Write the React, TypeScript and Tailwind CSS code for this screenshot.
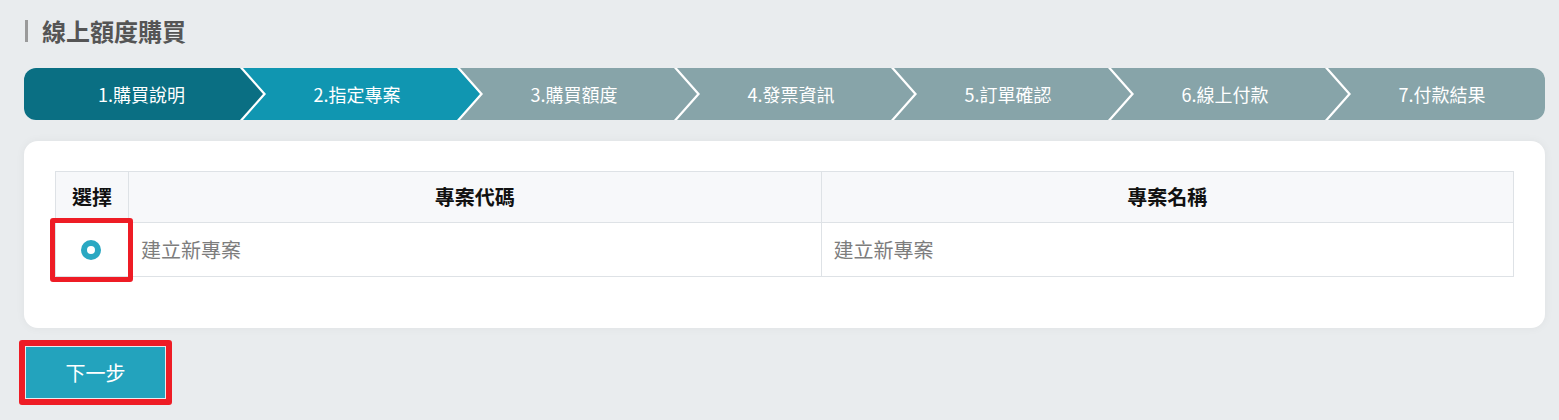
import React from "react";

const steps = [
  "1.購買說明",
  "2.指定專案",
  "3.購買額度",
  "4.發票資訊",
  "5.訂單確認",
  "6.線上付款",
  "7.付款結果",
];

const stepShape = (i: number) => {
  if (i === 0)
    return "w-[239px] pr-[4px] [clip-path:polygon(0_0,calc(100%_-_23px)_0,100%_50%,calc(100%_-_23px)_100%,0_100%)]";
  if (i === steps.length - 1)
    return "w-[217px] -ml-[20px] pl-[11px] [clip-path:polygon(0_0,100%_0,100%_100%,0_100%,23px_50%)]";
  return "w-[237px] -ml-[20px] pr-[9px] [clip-path:polygon(0_0,calc(100%_-_23px)_0,100%_50%,calc(100%_-_23px)_100%,0_100%,23px_50%)]";
};

const stepColor = (i: number) => {
  if (i === 0) return "bg-[#0a6f83]";
  if (i === 1) return "bg-[#1096b1]";
  return "bg-[#87a4a9]";
};

export default function App() {
  return (
    <div
      className="min-h-[420px] bg-[#e9ecee] pl-[24px] pr-[14px] pt-[20px]"
      style={{ fontFamily: '"Noto Sans CJK TC", "Noto Sans", sans-serif' }}
    >
      {/* title */}
      <div className="ml-px flex h-[22px] items-center border-l-[3px] border-[#9a9a9a] pl-[14px]">
        <span className="text-[24px] font-bold leading-[22px] text-[#555]">
          線上額度購買
        </span>
      </div>

      {/* steps */}
      <div className="mt-[26px] flex h-[52px] overflow-hidden rounded-[12px] bg-white">
        {steps.map((s, i) => (
          <div
            key={s}
            className={`${stepShape(i)} ${stepColor(i)} flex shrink-0 items-center justify-center text-[18px] text-white`}
          >
            {s}
          </div>
        ))}
      </div>

      {/* card */}
      <div className="mt-[21px] rounded-[14px] bg-white px-[31px] pb-[51px] pt-[30px] shadow-[0_0_10px_rgba(0,0,0,0.05)]">
        <div className="relative">
          <table className="w-full table-fixed border-collapse text-[20px]">
            <colgroup>
              <col className="w-[73px]" />
              <col />
              <col />
            </colgroup>
            <thead>
              <tr className="h-[51px] bg-[#f7f8fa]">
                <th className="border border-[#dee2e6] font-bold text-[#111]">選擇</th>
                <th className="border border-[#dee2e6] font-bold text-[#111]">專案代碼</th>
                <th className="border border-[#dee2e6] font-bold text-[#111]">專案名稱</th>
              </tr>
            </thead>
            <tbody>
              <tr className="h-[54px]">
                <td className="border border-[#dee2e6]">
                  <div className="flex justify-center pr-[3px]">
                    <span className="h-[20px] w-[20px] rounded-full border-[6px] border-[#2aa8c2] bg-white" />
                  </div>
                </td>
                <td className="border border-[#dee2e6] px-[12px] text-[#7d7d7d]">建立新專案</td>
                <td className="border border-[#dee2e6] px-[12px] text-[#7d7d7d]">建立新專案</td>
              </tr>
            </tbody>
          </table>
          <div className="absolute left-[-5px] top-[47px] h-[64px] w-[83px] rounded-[3px] border-[5px] border-[#ee1c25]" />
        </div>
      </div>

      {/* next */}
      <div className="relative ml-[2px] mt-[19px] w-[139px]">
        <button className="flex h-[51px] w-[139px] items-center justify-center bg-[#23a3bd] text-[20px] text-white">
          下一步
        </button>
        <div className="absolute -inset-[7px] rounded-[3px] border-[6px] border-[#ee1c25]" />
      </div>
    </div>
  );
}
